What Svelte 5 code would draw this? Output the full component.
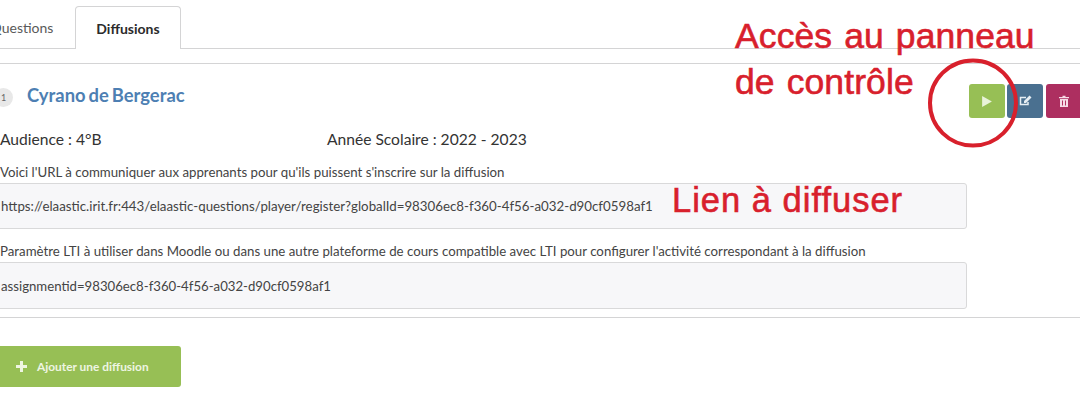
<script>
	const audience = "4°B";
	const year = "2022 - 2023";
	const registerUrl = "https://elaastic.irit.fr:443/elaastic-questions/player/register?globalId=98306ec8-f360-4f56-a032-d90cf0598af1";
	const ltiParam = "assignmentid=98306ec8-f360-4f56-a032-d90cf0598af1";
</script>

<main class="page">
	<nav class="tabs">
		<span class="tab">Questions</span>
		<span class="tab active">Diffusions</span>
	</nav>

	<section class="broadcast">
		<div class="head">
			<span class="badge">1</span>
			<h2>Cyrano de Bergerac</h2>
			<div class="actions">
				<button class="play" aria-label="Lancer">
					<svg width="12" height="13" viewBox="0 0 11 12"><path d="M1 1l9 5-9 5z" fill="#e9f3d9" /></svg>
				</button>
				<button class="edit" aria-label="Modifier">
					<svg width="13" height="12" viewBox="0 0 13 12">
						<path d="M9 7v2.500H1.500v-7H7" fill="none" stroke="#e6eef4" stroke-width="1.500" />
						<path d="M5 8V6l5.500-5.500 2 2L7 8z" fill="#e6eef4" />
					</svg>
				</button>
				<button class="remove" aria-label="Supprimer">
					<svg width="10" height="12" viewBox="0 0 10 12">
						<path d="M3.500 2V.8h3V2H10v1.300H0V2zM1 4h8v8H1z" fill="#f6dbe6" />
						<path d="M3.500 5.500v5M6.500 5.500v5" stroke="#b0305f" />
					</svg>
				</button>
			</div>
		</div>

		<div class="meta">
			<span class="audience">Audience : {audience}</span>
			<span>Année Scolaire : {year}</span>
		</div>

		<p class="label first">Voici l'URL à communiquer aux apprenants pour qu'ils puissent s'inscrire sur la diffusion</p>
		<div class="value">{registerUrl}</div>

		<p class="label second">Paramètre LTI à utiliser dans Moodle ou dans une autre plateforme de cours compatible avec LTI pour configurer l'activité correspondant à la diffusion</p>
		<div class="value tall">{ltiParam}</div>
	</section>

	<button class="add">
		<svg width="11" height="11" viewBox="0 0 11 11"><path d="M4 0h3v4h4v3H7v4H4V7H0V4h4z" fill="#eef5e2" /></svg>
		Ajouter une diffusion
	</button>

	<div class="note note-panel">Accès au panneau<br />de contrôle</div>
	<div class="note note-link">Lien à diffuser</div>
	<svg class="ring" width="96" height="96" viewBox="0 0 96 96">
		<ellipse cx="48" cy="48" rx="43" ry="42.500" fill="none" stroke="#d8202c" stroke-width="4" />
	</svg>
</main>

<style>
	:global(body) {
		background: #fff;
		overflow: hidden;
	}

	.page {
		position: relative;
		width: 1080px;
		height: 407px;
		overflow: hidden;
		padding-top: 6px;
		box-sizing: border-box;
		font-family: Lato, "Liberation Sans", sans-serif;
		color: #3a3a3a;
	}

	.tabs {
		display: flex;
		height: 42px;
		padding-left: 75px;
		border-bottom: 1px solid #d4d4d5;
	}

	.tab {
		display: flex;
		align-items: center;
		justify-content: center;
		width: 106px;
		height: 43px;
		margin-left: -106px;
		box-sizing: border-box;
		font-size: 14px;
		color: #5a5a5a;
	}

	.tab.active {
		margin-left: 0;
		background: #fff;
		border: 1px solid #d4d4d5;
		border-bottom: 0;
		border-radius: 4px 4px 0 0;
		font-weight: 700;
		color: #2b2b2b;
	}

	.broadcast {
		margin-top: 14px;
		padding-top: 20px;
		height: 255px;
		box-sizing: border-box;
		border-top: 1px solid #d4d4d5;
		border-bottom: 1px solid #d4d4d5;
	}

	.head {
		display: flex;
		align-items: flex-start;
		height: 34px;
		margin-left: -6px;
	}

	.badge {
		display: flex;
		align-items: center;
		justify-content: center;
		flex: none;
		width: 19px;
		height: 19px;
		margin-top: 4px;
		border-radius: 50%;
		background: #e8e8e8;
		font-size: 9px;
		color: #666;
	}

	h2 {
		margin: 0 0 0 14px;
		font-size: 18.400px;
		line-height: 22px;
		font-weight: 700;
		word-spacing: -1.500px;
		color: #4d7fb3;
	}

	.actions {
		display: flex;
		gap: 2px;
		margin-left: auto;
		margin-right: -2px;
	}

	.actions button {
		display: flex;
		align-items: center;
		justify-content: center;
		width: 36px;
		height: 34px;
		padding: 0;
		border: 0;
		border-radius: 3px;
	}

	.play {
		background: #97bf55;
	}

	.edit {
		background: #4a7090;
	}

	.remove {
		background: #ad2f60;
		margin-left: 1px;
	}

	.meta {
		display: flex;
		margin-top: 11px;
		font-size: 15.600px;
		line-height: 20px;
		color: #333;
	}

	.audience {
		width: 327px;
		box-sizing: border-box;
	}

	.label {
		margin: 0;
		font-size: 13.250px;
		line-height: 16px;
		color: #444;
	}

	.first {
		margin-top: 15px;
	}

	.second {
		margin-top: 14px;
	}

	.value {
		width: 973px;
		height: 46px;
		margin-top: 3px;
		margin-left: -6px;
		padding-left: 6px;
		box-sizing: border-box;
		display: flex;
		align-items: center;
		background: #f7f7f9;
		border: 1px solid #d9d9da;
		border-radius: 3px;
		font-size: 13.300px;
		color: #444;
	}

	.value.tall {
		height: 47px;
		font-size: 13.200px;
	}

	.add {
		display: flex;
		align-items: center;
		gap: 10px;
		width: 191px;
		height: 41px;
		margin-top: 28px;
		margin-left: -10px;
		padding: 0 0 0 26px;
		border: 0;
		border-radius: 3px;
		background: #97bf55;
		font-family: inherit;
		font-size: 11.900px;
		font-weight: 700;
		color: #eef5e2;
	}

	.note {
		position: absolute;
		font-family: "Liberation Sans", Arial, sans-serif;
		color: #d8202c;
		-webkit-text-stroke: 0.6px #d8202c;
	}

	.note-panel {
		left: 735px;
		top: 13px;
		font-size: 35.500px;
		line-height: 46px;
		letter-spacing: 0.100px;
		word-spacing: 2px;
	}

	.note-link {
		left: 672px;
		top: 180px;
		font-size: 34.500px;
		line-height: 40px;
		letter-spacing: 1px;
	}

	.ring {
		position: absolute;
		left: 925px;
		top: 55px;
	}
</style>
